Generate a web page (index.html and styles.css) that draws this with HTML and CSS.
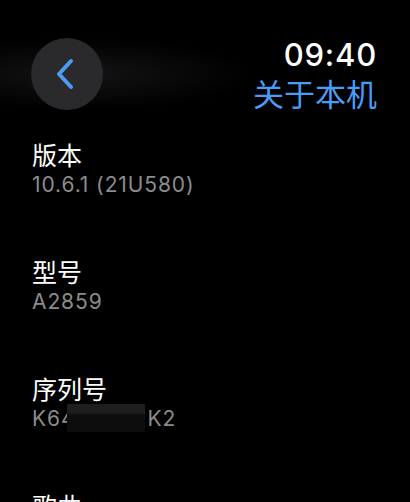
FILE: index.html
```html
<!DOCTYPE html>
<html lang="zh">
<head>
<meta charset="UTF-8" />
<title>关于本机</title>
<link rel="stylesheet" href="styles.css">
</head>
<body>

<div class="cabecera">
  <button class="atras" aria-label="返回">
    <svg width="20" height="32" viewBox="0 0 20 32">
      <path d="M16 3 L4 16 L16 29" fill="none" stroke="#4b9cf5" stroke-width="4" stroke-linecap="round" stroke-linejoin="round"/>
    </svg>
  </button>
  <div class="titulo">
    <div class="hora">09:40</div>
    <div class="pagina">关于本机</div>
  </div>
</div>

<div class="lista">
  <div class="fila">
    <div class="etiqueta">版本</div>
    <div class="valor">10.6.1 (21U580)</div>
  </div>
  <div class="fila">
    <div class="etiqueta">型号</div>
    <div class="valor">A2859</div>
  </div>
  <div class="fila">
    <div class="etiqueta">序列号</div>
    <div class="valor">K64<span class="oculto"></span>K2</div>
  </div>
  <div class="fila">
    <div class="etiqueta">歌曲</div>
  </div>
</div>

</body>
</html>
```
FILE: styles.css
```css
body {
  margin: 0;
  background: #000;
  color: #fff;
  font-family: Inter, "Noto Sans CJK SC", sans-serif;
  overflow: hidden;
}

.cabecera {
  display: flex;
  justify-content: space-between;
  align-items: flex-start;
  padding: 37px 33px 0 31px;
  background: radial-gradient(ellipse 170px 36px at 80px 74px, #141416, #000 100%);
  background-repeat: no-repeat;
}
.atras {
  width: 72px;
  height: 72px;
  border-radius: 50%;
  border: none;
  background: #2a2a2c;
  display: flex;
  align-items: center;
  justify-content: center;
  padding: 0 4px 0 0;
  margin-top: 1px;
}
.titulo {
  text-align: right;
}
.hora {
  font-size: 31px;
  font-weight: 500;
  line-height: 35px;
  letter-spacing: 0.8px;
}
.pagina {
  font-family: "Noto Sans CJK SC", sans-serif;
  color: #4b9cf5;
  font-size: 31px;
  line-height: 40px;
  margin-top: 1px;
}

.lista {
  padding: 24px 0 0 32px;
}
.fila {
  height: 117px;
}
.etiqueta {
  font-family: "Noto Sans CJK SC", sans-serif;
  font-size: 25px;
  line-height: 34px;
}
.valor {
  color: #8c8c8c;
  font-size: 21px;
  line-height: 26px;
  letter-spacing: 0.9px;
  margin-top: 1px;
}
.oculto {
  display: inline-block;
  width: 78px;
  height: 28px;
  margin-left: -8px;
  margin-right: 2px;
  vertical-align: top;
  transform: translateY(-2px);
  background: linear-gradient(#1e1e1e 30%, #0d0d0d 42%);
}
```
